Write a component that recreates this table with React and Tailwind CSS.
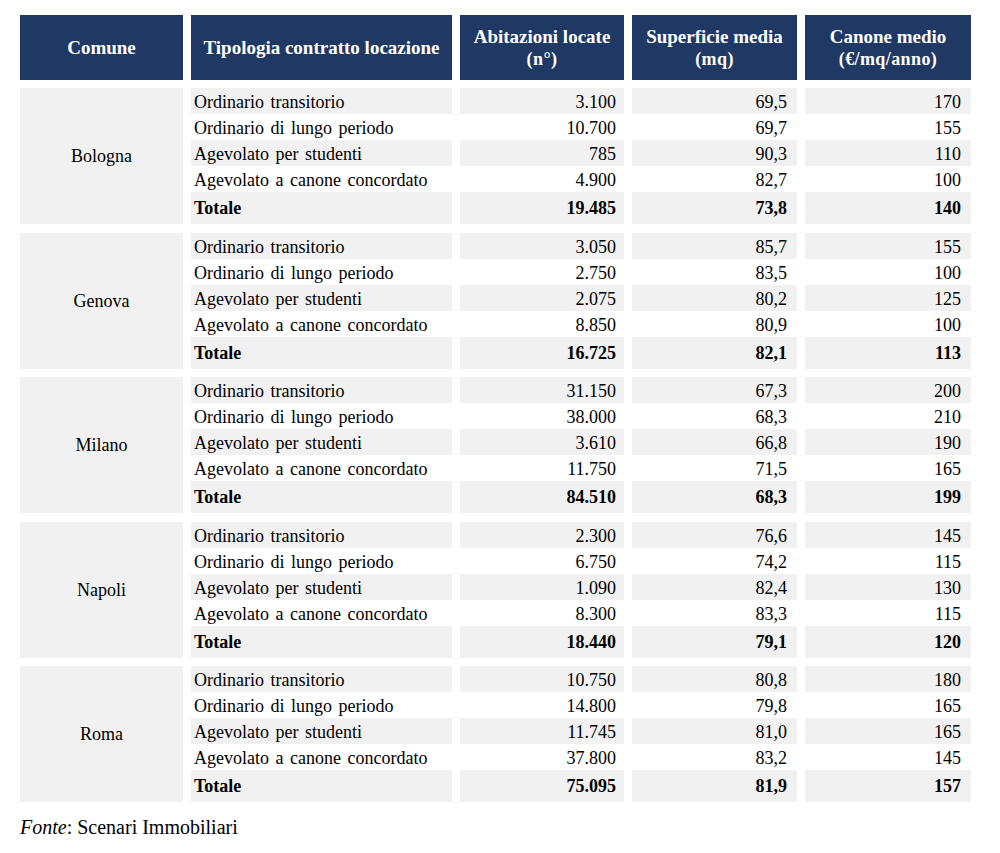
const rows = [
  {
    city: 'Bologna',
    items: [
      ['Ordinario transitorio', '3.100', '69,5', '170'],
      ['Ordinario di lungo periodo', '10.700', '69,7', '155'],
      ['Agevolato per studenti', '785', '90,3', '110'],
      ['Agevolato a canone concordato', '4.900', '82,7', '100'],
    ],
    total: ['19.485', '73,8', '140'],
  },
  {
    city: 'Genova',
    items: [
      ['Ordinario transitorio', '3.050', '85,7', '155'],
      ['Ordinario di lungo periodo', '2.750', '83,5', '100'],
      ['Agevolato per studenti', '2.075', '80,2', '125'],
      ['Agevolato a canone concordato', '8.850', '80,9', '100'],
    ],
    total: ['16.725', '82,1', '113'],
  },
  {
    city: 'Milano',
    items: [
      ['Ordinario transitorio', '31.150', '67,3', '200'],
      ['Ordinario di lungo periodo', '38.000', '68,3', '210'],
      ['Agevolato per studenti', '3.610', '66,8', '190'],
      ['Agevolato a canone concordato', '11.750', '71,5', '165'],
    ],
    total: ['84.510', '68,3', '199'],
  },
  {
    city: 'Napoli',
    items: [
      ['Ordinario transitorio', '2.300', '76,6', '145'],
      ['Ordinario di lungo periodo', '6.750', '74,2', '115'],
      ['Agevolato per studenti', '1.090', '82,4', '130'],
      ['Agevolato a canone concordato', '8.300', '83,3', '115'],
    ],
    total: ['18.440', '79,1', '120'],
  },
  {
    city: 'Roma',
    items: [
      ['Ordinario transitorio', '10.750', '80,8', '180'],
      ['Ordinario di lungo periodo', '14.800', '79,8', '165'],
      ['Agevolato per studenti', '11.745', '81,0', '165'],
      ['Agevolato a canone concordato', '37.800', '83,2', '145'],
    ],
    total: ['75.095', '81,9', '157'],
  },
];

const grid = 'grid grid-cols-[163px_261px_164px_165px_166px] gap-x-[8px]';

function HeadCell({ title, sub }) {
  return (
    <div className="flex h-[65px] flex-col items-center justify-center bg-[#1f3864] font-bold text-white">
      <span className="text-[19px] leading-[23px]">{title}</span>
      {sub && <span className="text-[18px] leading-[23px] tracking-[0.4px]">{sub}</span>}
    </div>
  );
}

function Block({ city, items, total }) {
  return (
    <div className={`${grid} grid-rows-[26px_26px_26px_26px_32px]`}>
      <div className="col-start-1 row-span-5 row-start-1 flex items-center justify-center bg-[#f1f1f1]">
        {city}
      </div>
      {items.map((it, i) => {
        const bg = i % 2 === 0 ? 'bg-[#f1f1f1]' : 'bg-white';
        return [
          <div key={`${i}a`} className={`${bg} flex items-center pl-[3px] pt-[2px] [word-spacing:2px]`}>{it[0]}</div>,
          <div key={`${i}b`} className={`${bg} flex items-center justify-end pr-[8px] pt-[2px]`}>{it[1]}</div>,
          <div key={`${i}c`} className={`${bg} flex items-center justify-end pr-[10px] pt-[2px]`}>{it[2]}</div>,
          <div key={`${i}d`} className={`${bg} flex items-center justify-end pr-[10px] pt-[2px]`}>{it[3]}</div>,
        ];
      })}
      <div className="flex items-center bg-[#f1f1f1] pl-[3px] font-bold">Totale</div>
      <div className="flex items-center justify-end bg-[#f1f1f1] pr-[8px] font-bold">{total[0]}</div>
      <div className="flex items-center justify-end bg-[#f1f1f1] pr-[10px] font-bold">{total[1]}</div>
      <div className="flex items-center justify-end bg-[#f1f1f1] pr-[10px] font-bold">{total[2]}</div>
    </div>
  );
}

export default function App() {
  return (
    <div className="min-h-[853px] w-[1000px] bg-white pl-[20px] pt-[15px] [font-family:'Liberation_Serif',serif] text-[18px] leading-[22px] text-black">
      <div className="flex flex-col gap-y-[8.5px]">
        <div className={`${grid} mb-[-0.5px]`}>
          <HeadCell title="Comune" />
          <HeadCell title="Tipologia contratto locazione" />
          <HeadCell title="Abitazioni locate" sub="(n°)" />
          <HeadCell title="Superficie media" sub="(mq)" />
          <HeadCell title="Canone medio" sub="(€/mq/anno)" />
        </div>
        {rows.map((r) => (
          <Block key={r.city} {...r} />
        ))}
      </div>
      <p className="mt-[14px] text-[20px]">
        <i>Fonte</i>: Scenari Immobiliari
      </p>
    </div>
  );
}
